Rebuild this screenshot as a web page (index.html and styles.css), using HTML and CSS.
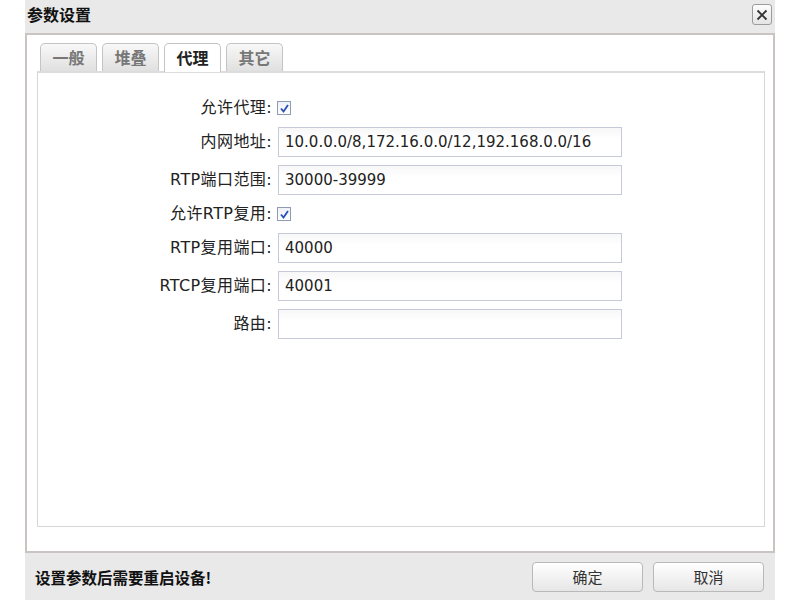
FILE: index.html
```html
<!DOCTYPE html>
<html lang="zh-CN">
<head>
  <meta charset="UTF-8">
  <title>参数设置</title>
  <link rel="stylesheet" href="styles.css">
</head>
<body>
  <div class="dialog">
    <!-- Title bar -->
    <div class="title-bar">
      <span class="title">参数设置</span>
      <span class="close-btn">
        <svg width="12" height="12" viewBox="0 0 12 12"><path d="M1.5 1.5 L10.5 10.5 M10.5 1.5 L1.5 10.5" stroke="#333" stroke-width="1.8" fill="none"/></svg>
      </span>
    </div>

    <div class="content">
      <div class="tabs">
        <div class="tab">一般</div>
        <div class="tab">堆叠</div>
        <div class="tab active">代理</div>
        <div class="tab">其它</div>
      </div>

      <div class="panel">
        <div class="form-grid">
          <label class="row-label check-row">允许代理:</label>
          <div class="check-row"><span class="checkbox"><svg width="11" height="11" viewBox="0 0 11 11"><path d="M2 5.5 L4.5 8.5 L9 2" stroke="#2a4fb5" stroke-width="1.8" fill="none"/></svg></span></div>

          <label class="row-label">内网地址:</label>
          <div class="field">10.0.0.0/8,172.16.0.0/12,192.168.0.0/16</div>

          <label class="row-label">RTP端口范围:</label>
          <div class="field">30000-39999</div>

          <label class="row-label check-row">允许RTP复用:</label>
          <div class="check-row"><span class="checkbox"><svg width="11" height="11" viewBox="0 0 11 11"><path d="M2 5.5 L4.5 8.5 L9 2" stroke="#2a4fb5" stroke-width="1.8" fill="none"/></svg></span></div>

          <label class="row-label">RTP复用端口:</label>
          <div class="field">40000</div>

          <label class="row-label">RTCP复用端口:</label>
          <div class="field">40001</div>

          <label class="row-label">路由:</label>
          <div class="field"></div>
        </div>
      </div>
    </div>

    <!-- Footer -->
    <div class="footer">
      <span class="notice">设置参数后需要重启设备!</span>
      <div class="buttons">
        <button class="btn">确定</button>
        <button class="btn">取消</button>
      </div>
    </div>
  </div>
</body>
</html>
```

FILE: styles.css
```css
body {
  margin: 0;
  background: #fff;
  font-family: "DejaVu Sans", "Noto Sans CJK SC", sans-serif;
  color: #222;
}

.dialog {
  width: 750px;
  height: 600px;
  margin-left: 25px;
  background: #e9e9e9;
  display: flex;
  flex-direction: column;
}

/* Title bar */
.title-bar {
  height: 33px;
  display: flex;
  align-items: flex-start;
  justify-content: space-between;
  padding: 0 3px 0 2px;
  box-sizing: border-box;
}

.title {
  font-family: "Noto Sans CJK SC", sans-serif;
  font-weight: bold;
  font-size: 16px;
  line-height: 28px;
  color: #111;
}

.close-btn {
  margin-top: 4px;
  width: 20px;
  height: 21px;
  box-sizing: border-box;
  border: 1px solid #9c9c9c;
  border-radius: 3px;
  background: linear-gradient(#fdfdfd, #e4e4e4);
  display: flex;
  align-items: center;
  justify-content: center;
}

/* Main content box */
.content {
  height: 520px;
  box-sizing: border-box;
  background: #fff;
  border: 2px solid #c9c4c1;
  padding: 8px 8px 24px 10px;
  display: flex;
  flex-direction: column;
}

.tabs {
  display: flex;
  gap: 5px;
  padding-left: 3px;
  height: 28px;
  position: relative;
  z-index: 1;
}

.tab {
  width: 57px;
  height: 28px;
  box-sizing: border-box;
  border: 1px solid #c4c4c4;
  border-bottom: none;
  border-radius: 5px 5px 0 0;
  background: linear-gradient(#f8f8f8, #e0e0e0);
  font-family: "Noto Sans CJK SC", sans-serif;
  font-size: 16px;
  font-weight: bold;
  color: #777;
  text-align: center;
  line-height: 27px;
}

.tab.active {
  background: #fff;
  color: #222;
  height: 29px;
}

.panel {
  flex: 1;
  border: 1px solid #d6d6d6;
  border-top: 2px solid #dcdcdc;
  padding-top: 24px;
}

.form-grid {
  display: grid;
  grid-template-columns: 234px 344px;
  column-gap: 6px;
  row-gap: 8px;
}

.row-label {
  font-size: 16px;
  letter-spacing: 0.4px;
  text-align: right;
  line-height: 30px;
  height: 30px;
  white-space: nowrap;
}

.check-row {
  height: 22px;
  line-height: 22px;
  display: flex;
  align-items: center;
  justify-content: flex-end;
}

div.check-row {
  justify-content: flex-start;
}

.checkbox {
  width: 14px;
  height: 14px;
  box-sizing: border-box;
  border: 1px solid #8e9bb2;
  background: linear-gradient(#eef1f6, #fff);
  display: flex;
  align-items: center;
  justify-content: center;
  margin-left: -1px;
}

.field {
  height: 30px;
  box-sizing: border-box;
  border: 1px solid #c6c9d8;
  background: linear-gradient(#f7f7f7, #fff 40%);
  font-size: 15px;
  line-height: 28px;
  padding-left: 6px;
  color: #222;
}

/* Footer */
.footer {
  flex: 1;
  display: flex;
  align-items: center;
  justify-content: space-between;
  padding: 0 11px 0 10px;
}

.notice {
  font-family: "Noto Sans CJK SC", sans-serif;
  font-weight: bold;
  font-size: 15.5px;
  color: #111;
}

.buttons {
  display: flex;
  gap: 10px;
}

.btn {
  width: 111px;
  height: 30px;
  border: 1px solid #b9b9b9;
  border-radius: 4px;
  background: linear-gradient(#ffffff, #e6e6e6);
  font-family: "Noto Sans CJK SC", sans-serif;
  font-size: 15px;
  color: #333;
  cursor: pointer;
}
```
